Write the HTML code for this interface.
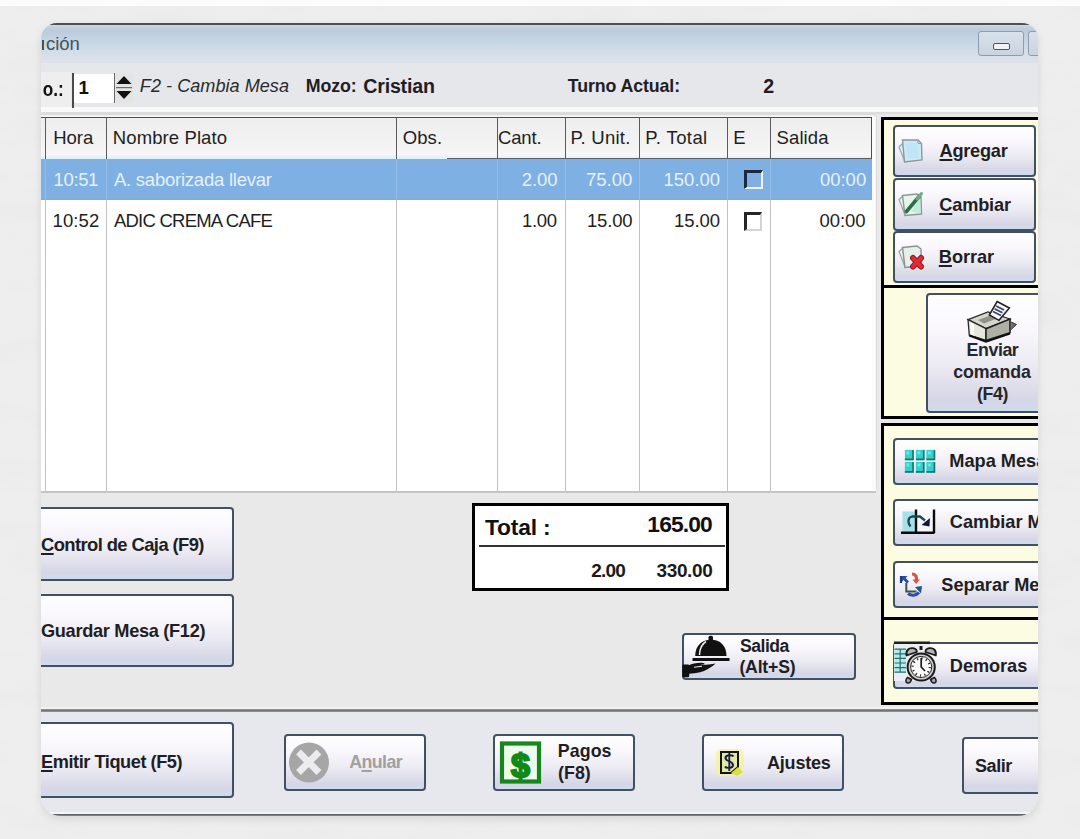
<!DOCTYPE html>
<html><head><meta charset="utf-8">
<style>
*{margin:0;padding:0;box-sizing:border-box}
html,body{width:1080px;height:839px;overflow:hidden}
body{position:relative;background:#ededee;font-family:"Liberation Sans",sans-serif;color:#1a1a1a}
.a{position:absolute}
svg.a{overflow:visible}
#win{position:absolute;left:0;top:0;width:1080px;height:839px;clip-path:inset(23px 42px 23px 41px round 16px 16px 20px 20px);background:#e9e9e9}
.btn{position:absolute;border:2px solid #435062;border-radius:4px;
 background:linear-gradient(#fefeff 0%,#f9f7fc 30%,#ecebf3 60%,#d6d6e6 90%,#cddcee 100%)}
.t{position:absolute;white-space:nowrap;line-height:1}
.col{top:117px;width:1px;height:374px;background:#bdbdbd}
.hcol{top:117px;width:1px;height:42px;background:#5a5a5a}
.panel{background:#fcfce2;border:3px solid #000}
u{text-decoration:underline;text-decoration-thickness:1.5px;text-underline-offset:2px}
</style></head><body>
<svg class="a" style="left:0;top:0" width="1080" height="839"><filter id="tx" x="0" y="0" width="100%" height="100%"><feTurbulence type="fractalNoise" baseFrequency="0.012 0.035" numOctaves="4" seed="7"/><feColorMatrix values="0 0 0 0 0.5  0 0 0 0 0.5  0 0 0 0 0.5  1.1 0 0 0 -0.45"/></filter><rect width="1080" height="839" fill="#eeeeef"/><rect width="1080" height="839" filter="url(#tx)" opacity="0.10"/></svg>
<div class="a" style="left:0px;top:0px;width:1080px;height:6px;background:#fcfcfc"></div>
<div class="a" style="left:41px;top:23px;width:997px;height:793px;border-radius:16px 16px 20px 20px;box-shadow:0 3px 8px rgba(0,0,0,.10)"></div>
<div id="win">
<div class="a" style="left:41px;top:23px;width:998px;height:40px;background:linear-gradient(#e2e4e8 0px,#c2d0de 4px,#bccbdc 8px,#c6d8e4 20px,#d4dee8 30px,#dee1ea 40px)"></div>
<div class="a" style="left:41px;top:23px;width:998px;height:2px;background:#4a5058"></div>
<div class="a" style="left:978px;top:31px;width:46px;height:25px;border:1px solid #8d9cae;border-radius:3px;background:linear-gradient(#d9e2eb,#c9d4e0)"></div>
<div class="a" style="left:993px;top:43px;width:17px;height:7px;border:1px solid #4e565f;border-radius:2px;background:#f2f2f2"></div>
<div class="a" style="left:1028px;top:31px;width:24px;height:25px;border:1px solid #8d9cae;border-radius:3px;background:linear-gradient(#d9e2eb,#c9d4e0)"></div>
<div class="a" style="left:41px;top:63px;width:998px;height:48px;background:#e5e7eb"></div>
<div class="a" style="left:41px;top:72px;width:30px;height:36px;background:#eeeeee"></div>
<div class="a" style="left:41px;top:107px;width:998px;height:5px;background:#f9f9f9"></div>
<div class="a" style="left:41px;top:112px;width:998px;height:2px;background:#dcdcdc"></div>
<div class="a" style="left:72px;top:73px;width:2px;height:35px;background:#4a4a4a"></div>
<div class="a" style="left:74px;top:74px;width:40px;height:29px;background:#fff;border-radius:0 0 3px 3px"></div>
<div class="a" style="left:114px;top:73px;width:1px;height:30px;background:#6a6a6a"></div>
<div class="a" style="left:115px;top:73px;width:18px;height:30px;background:#e4e4e4"></div>
<svg class="a" style="left:115px;top:74px" width="18" height="28" viewBox="0 0 18 28"><path d="M9 2 L16.5 10 L1.5 10Z M1.5 17 L16.5 17 L9 25Z" fill="#111"/><rect x="1" y="13" width="16" height="1.2" fill="#6a6a6a"/></svg>
<div class="a" style="left:41px;top:114px;width:836px;height:379px;background:#f4f4f4;border-radius:0 4px 6px 0;border:1px solid #d8d8d8;border-left:none"></div>
<div class="a" style="left:41px;top:117px;width:831px;height:374px;background:#fff"></div>
<div class="a" style="left:41px;top:117px;width:831px;height:42px;background:linear-gradient(#eeeeee,#f3f3f3 70%,#f8f8f8)"></div>
<div class="a" style="left:41px;top:117px;width:831px;height:1px;background:#505050"></div>
<div class="a" style="left:41px;top:155px;width:831px;height:4px;background:linear-gradient(#f4f6f8,#dcf0fa)"></div>
<div class="a" style="left:447px;top:158px;width:425px;height:1px;background:#606060"></div>
<div class="a" style="left:41px;top:159px;width:831px;height:41px;background:linear-gradient(#8cadcc 0px,#7eb0e3 2px,#7eb0e3 39px,#8ea8c2 41px)"></div>
<div class="a" style="left:871px;top:117px;width:1px;height:42px;background:#505050"></div>
<div class="a" style="left:872px;top:117px;width:4px;height:375px;background:#fafafa"></div>
<div class="a" style="left:41px;top:491px;width:835px;height:2px;background:#c4c4c4"></div>
<div class="a" style="left:45px;top:200px;width:1px;height:291px;background:#c2c2c2"></div>
<div class="a" style="left:45px;top:159px;width:1px;height:41px;background:#94bce6"></div>
<div class="a hcol" style="left:45px"></div>
<div class="a" style="left:106px;top:200px;width:1px;height:291px;background:#c2c2c2"></div>
<div class="a" style="left:106px;top:159px;width:1px;height:41px;background:#94bce6"></div>
<div class="a hcol" style="left:106px"></div>
<div class="a" style="left:396px;top:200px;width:1px;height:291px;background:#c2c2c2"></div>
<div class="a" style="left:396px;top:159px;width:1px;height:41px;background:#94bce6"></div>
<div class="a hcol" style="left:396px"></div>
<div class="a" style="left:497px;top:200px;width:1px;height:291px;background:#c2c2c2"></div>
<div class="a" style="left:497px;top:159px;width:1px;height:41px;background:#94bce6"></div>
<div class="a hcol" style="left:497px"></div>
<div class="a" style="left:565px;top:200px;width:1px;height:291px;background:#c2c2c2"></div>
<div class="a" style="left:565px;top:159px;width:1px;height:41px;background:#94bce6"></div>
<div class="a hcol" style="left:565px"></div>
<div class="a" style="left:639px;top:200px;width:1px;height:291px;background:#c2c2c2"></div>
<div class="a" style="left:639px;top:159px;width:1px;height:41px;background:#94bce6"></div>
<div class="a hcol" style="left:639px"></div>
<div class="a" style="left:727px;top:200px;width:1px;height:291px;background:#c2c2c2"></div>
<div class="a" style="left:727px;top:159px;width:1px;height:41px;background:#94bce6"></div>
<div class="a hcol" style="left:727px"></div>
<div class="a" style="left:770px;top:200px;width:1px;height:291px;background:#c2c2c2"></div>
<div class="a" style="left:770px;top:159px;width:1px;height:41px;background:#94bce6"></div>
<div class="a hcol" style="left:770px"></div>
<div class="a" style="left:744px;top:170px;width:19px;height:19px;border-top:3px solid #1c2a3c;border-left:3px solid #1c2a3c;border-right:2px solid #eef4fc;border-bottom:2px solid #eef4fc;background:#7eb0e3"></div>
<div class="a" style="left:744px;top:212px;width:18px;height:19px;border-top:3px solid #262626;border-left:3px solid #262626;border-right:2px solid #d4d4d4;border-bottom:2px solid #d4d4d4;background:#fff"></div>
<div class="a panel" style="left:881px;top:117px;width:170px;height:302px;"></div>
<div class="a" style="left:881px;top:285px;width:170px;height:3px;background:#000"></div>
<div class="btn" style="left:893px;top:125px;width:143px;height:52px;"></div>
<div class="btn" style="left:893px;top:178px;width:143px;height:53px;"></div>
<div class="btn" style="left:893px;top:231px;width:143px;height:52px;"></div>
<div class="btn" style="left:926px;top:293px;width:130px;height:120px;"></div>
<div class="a panel" style="left:881px;top:423px;width:170px;height:282px;"></div>
<div class="a" style="left:881px;top:617px;width:170px;height:3px;background:#000"></div>
<div class="btn" style="left:893px;top:438px;width:150px;height:47px;"></div>
<div class="btn" style="left:893px;top:499px;width:150px;height:47px;"></div>
<div class="btn" style="left:893px;top:561px;width:150px;height:47px;"></div>
<div class="btn" style="left:893px;top:642px;width:150px;height:47px;"></div>
<div class="btn" style="left:20px;top:507px;width:214px;height:74px;"></div>
<div class="btn" style="left:20px;top:594px;width:214px;height:73px;"></div>
<div class="a" style="left:472px;top:503px;width:257px;height:88px;background:#fff;border:3px solid #000"></div>
<div class="a" style="left:479px;top:545px;width:246px;height:2px;background:#333"></div>
<div class="btn" style="left:682px;top:633px;width:174px;height:47px;"></div>
<div class="a" style="left:41px;top:707px;width:998px;height:2px;background:#f2f2f2"></div>
<div class="a" style="left:41px;top:709px;width:998px;height:3px;background:linear-gradient(#9a9a9a,#747474 50%,#9a9a9a)"></div>
<div class="a" style="left:41px;top:712px;width:998px;height:104px;background:#e6e8ee"></div>
<div class="btn" style="left:20px;top:722px;width:214px;height:76px;"></div>
<div class="btn" style="left:284px;top:734px;width:142px;height:57px;"></div>
<div class="btn" style="left:493px;top:734px;width:142px;height:57px;"></div>
<div class="btn" style="left:702px;top:734px;width:142px;height:57px;"></div>
<div class="btn" style="left:962px;top:737px;width:100px;height:57px;"></div>
<div class="a" style="left:41px;top:812px;width:998px;height:2px;background:#f4f5f8"></div>
<div class="a" style="left:41px;top:814px;width:998px;height:2px;background:linear-gradient(#50565e,#8a8e94)"></div>
<div class="t" style="left:46.06px;top:34.84px;font-size:18.5px;color:#45515d;letter-spacing:-0.10px;">ción</div>
<div class="a" style="left:42px;top:40px;width:1.8px;height:9.5px;background:#45515d"></div>
<div class="t" style="left:42.81px;top:82.44px;font-size:17.2px;font-weight:bold;color:#111;transform:scaleY(1.15);transform-origin:0 84.7%;">o.:</div>
<div class="t" style="left:78.48px;top:79.46px;font-size:18.6px;font-weight:bold;color:#111;">1</div>
<div class="t" style="left:139.86px;top:77.38px;font-size:18.1px;font-style:italic;color:#2a2a2e;letter-spacing:0.02px;">F2 - Cambia Mesa</div>
<div class="t" style="left:305.84px;top:77.53px;font-size:17.8px;font-weight:bold;color:#1e1e24;letter-spacing:-0.13px;">Mozo:</div>
<div class="t" style="left:363.22px;top:77.41px;font-size:19.6px;font-weight:bold;color:#1e1e24;letter-spacing:-0.18px;">Cristian</div>
<div class="t" style="left:567.82px;top:77.53px;font-size:17.8px;font-weight:bold;color:#1e1e24;letter-spacing:-0.11px;">Turno Actual:</div>
<div class="t" style="left:763.31px;top:77.21px;font-size:19.6px;font-weight:bold;color:#1e1e24;">2</div>
<div class="t" style="left:53.22px;top:129.04px;font-size:18.5px;color:#1e1e1e;">Hora</div>
<div class="t" style="left:112.82px;top:129.04px;font-size:18.5px;color:#1e1e1e;letter-spacing:0.10px;">Nombre Plato</div>
<div class="t" style="left:402.77px;top:129.04px;font-size:18.5px;color:#1e1e1e;letter-spacing:0.09px;">Obs.</div>
<div class="t" style="left:497.97px;top:129.04px;font-size:18.5px;color:#1e1e1e;letter-spacing:-0.13px;">Cant.</div>
<div class="t" style="left:570.42px;top:129.04px;font-size:18.5px;color:#1e1e1e;letter-spacing:0.24px;">P. Unit.</div>
<div class="t" style="left:645.32px;top:129.04px;font-size:18.5px;color:#1e1e1e;letter-spacing:0.42px;">P. Total</div>
<div class="t" style="left:733.32px;top:129.04px;font-size:18.5px;color:#1e1e1e;">E</div>
<div class="t" style="left:776.57px;top:129.04px;font-size:18.5px;color:#1e1e1e;letter-spacing:0.10px;">Salida</div>
<div class="t" style="left:53.61px;top:170.54px;font-size:18.5px;color:#e6f1fc;letter-spacing:-0.38px;">10:51</div>
<div class="t" style="left:113.90px;top:170.54px;font-size:18.5px;color:#e6f1fc;letter-spacing:-0.23px;">A. saborizada llevar</div>
<div class="t" style="left:521.67px;top:170.54px;font-size:18.5px;color:#e6f1fc;">2.00</div>
<div class="t" style="left:586.00px;top:170.54px;font-size:18.5px;color:#e6f1fc;">75.00</div>
<div class="t" style="left:663.54px;top:170.54px;font-size:18.5px;color:#e6f1fc;">150.00</div>
<div class="t" style="left:819.90px;top:170.54px;font-size:18.5px;color:#e6f1fc;">00:00</div>
<div class="t" style="left:52.51px;top:212.44px;font-size:18.5px;color:#1e1e1e;letter-spacing:0.12px;">10:52</div>
<div class="t" style="left:113.90px;top:212.44px;font-size:18.5px;color:#1e1e1e;letter-spacing:-0.76px;">ADIC CREMA CAFE</div>
<div class="t" style="left:521.91px;top:212.44px;font-size:18.5px;color:#1e1e1e;letter-spacing:-0.25px;">1.00</div>
<div class="t" style="left:587.01px;top:212.44px;font-size:18.5px;color:#1e1e1e;letter-spacing:-0.18px;">15.00</div>
<div class="t" style="left:673.91px;top:212.44px;font-size:18.5px;color:#1e1e1e;letter-spacing:-0.05px;">15.00</div>
<div class="t" style="left:819.56px;top:212.44px;font-size:18.5px;color:#1e1e1e;letter-spacing:-0.09px;">00:00</div>
<div class="t" style="left:939.54px;top:142.29px;font-size:18.2px;font-weight:bold;color:#1e1e24;letter-spacing:-0.26px;"><u>A</u>gregar</div>
<div class="t" style="left:939.27px;top:195.59px;font-size:18.2px;font-weight:bold;color:#1e1e24;letter-spacing:-0.17px;"><u>C</u>ambiar</div>
<div class="t" style="left:938.82px;top:248.09px;font-size:18.2px;font-weight:bold;color:#1e1e24;letter-spacing:-0.05px;"><u>B</u>orrar</div>
<div class="t" style="left:966.59px;top:342.43px;font-size:17.8px;font-weight:bold;color:#26262c;letter-spacing:-0.43px;">Enviar</div>
<div class="t" style="left:953.14px;top:364.43px;font-size:17.8px;font-weight:bold;color:#26262c;letter-spacing:-0.05px;">comanda</div>
<div class="t" style="left:977.11px;top:386.43px;font-size:17.8px;font-weight:bold;color:#26262c;letter-spacing:-0.43px;">(F4)</div>
<div class="t" style="left:949.32px;top:452.39px;font-size:18.2px;font-weight:bold;color:#1e1e24;">Mapa Mesa</div>
<div class="t" style="left:949.77px;top:513.29px;font-size:18.2px;font-weight:bold;color:#1e1e24;">Cambiar Mesa</div>
<div class="t" style="left:941.35px;top:575.59px;font-size:18.2px;font-weight:bold;color:#1e1e24;">Separar Mesa</div>
<div class="t" style="left:949.82px;top:656.79px;font-size:18.2px;font-weight:bold;color:#1e1e24;letter-spacing:-0.06px;">Demoras</div>
<div class="t" style="left:40.96px;top:535.72px;font-size:18.4px;font-weight:bold;color:#1e1e24;letter-spacing:-0.59px;"><u>C</u>ontrol de Caja (F9)</div>
<div class="t" style="left:40.97px;top:622.29px;font-size:18.2px;font-weight:bold;color:#1e1e24;letter-spacing:-0.31px;">Guardar Mesa (F12)</div>
<div class="t" style="left:485.07px;top:515.50px;font-size:22.8px;font-weight:bold;color:#111;letter-spacing:-0.20px;">Total :</div>
<div class="t" style="left:647.33px;top:512.80px;font-size:22.8px;font-weight:bold;color:#111;letter-spacing:-0.86px;">165.00</div>
<div class="t" style="left:591.14px;top:560.72px;font-size:19px;font-weight:bold;color:#1a1a1a;letter-spacing:-0.74px;">2.00</div>
<div class="t" style="left:656.52px;top:560.72px;font-size:19px;font-weight:bold;color:#1a1a1a;letter-spacing:-0.38px;">330.00</div>
<div class="t" style="left:739.97px;top:637.70px;font-size:17.6px;font-weight:bold;color:#1e1e24;letter-spacing:-0.50px;">Salida</div>
<div class="t" style="left:739.42px;top:658.90px;font-size:17.6px;font-weight:bold;color:#1e1e24;letter-spacing:-0.17px;">(Alt+S)</div>
<div class="t" style="left:41.02px;top:752.99px;font-size:18.2px;font-weight:bold;color:#1e1e24;letter-spacing:-0.45px;"><u>E</u>mitir Tiquet (F5)</div>
<div class="t" style="left:349.25px;top:753.93px;font-size:17.8px;font-weight:bold;color:#a0a0a0;letter-spacing:-0.58px;">A<u>n</u>ular</div>
<div class="t" style="left:557.84px;top:743.23px;font-size:17.8px;font-weight:bold;color:#1e1e24;letter-spacing:0.07px;">Pagos</div>
<div class="t" style="left:558.11px;top:764.93px;font-size:17.8px;font-weight:bold;color:#1e1e24;">(F8)</div>
<div class="t" style="left:767.05px;top:753.76px;font-size:18px;font-weight:bold;color:#1e1e24;letter-spacing:-0.22px;">Ajustes</div>
<div class="t" style="left:975.06px;top:756.76px;font-size:18px;font-weight:bold;color:#1e1e24;letter-spacing:-0.46px;">Salir</div>
<svg class="a" style="left:897px;top:137px" width="28" height="28" viewBox="0 0 28 28">
<path d="M2 10 L6 6 L8 25 Z" fill="#e4f2f6" stroke="#9aa4a8" stroke-width="1.2"/>
<path d="M5.5 3 L21 3 L24.5 6.5 L25 23 L7.5 25 Z" fill="#cdeaf4" stroke="#8c989c" stroke-width="1.4"/>
<path d="M9 6 L20 6 L22 21 L10 22Z" fill="#bfe6f6"/>
<path d="M20.5 3 L21 6.5 L24.5 6.5" stroke="#9aa4a8" stroke-width="1" fill="none"/>
</svg>
<svg class="a" style="left:897px;top:190px" width="30" height="28" viewBox="0 0 30 28">
<path d="M2 9.5 L6 6 L8 25 Z" fill="#eef6f2" stroke="#9aa4a0" stroke-width="1.2"/>
<path d="M5.5 5.5 L20 4 L24 7 L24.5 24 L8 25.5 Z" fill="#e6f4ee" stroke="#8c9894" stroke-width="1.4"/>
<path d="M14 22 L23 8 L23.5 23Z" fill="#bdeed8"/>
<path d="M9.5 21.5 L22.5 6" stroke="#2c7048" stroke-width="3.6" stroke-linecap="round"/>
<path d="M20 9 L24.5 3.5" stroke="#6cae84" stroke-width="3" stroke-linecap="round"/>
</svg>
<svg class="a" style="left:897px;top:242px" width="30" height="28" viewBox="0 0 30 28">
<path d="M2 9.5 L6 6 L8 25 Z" fill="#f0f4f2" stroke="#9aa29f" stroke-width="1.2"/>
<path d="M5.5 5.5 L20 4 L24 7 L24.5 24 L8 25.5 Z" fill="#e8f0ee" stroke="#8a9290" stroke-width="1.4"/>
<path d="M16 16 L24 24.5 M24 16 L16 24.5" stroke="#9a1a22" stroke-width="6" stroke-linecap="round"/>
<path d="M16 16 L24 24.5 M24 16 L16 24.5" stroke="#e22a34" stroke-width="4" stroke-linecap="round"/>
</svg>
<svg class="a" style="left:966px;top:299px" width="54" height="46" viewBox="0 0 54 46">
<path d="M2 20.6 L22 13 L44 20 L20 29.7Z" fill="#d4d6cc" stroke="#2a2a2a" stroke-width="1.3"/>
<path d="M12 21 L30 14.5 L36 17.5 L18 24.5Z" fill="#8e9288"/>
<path d="M31.1 2.5 L43.4 9 L33 21.3 L23.3 16Z" fill="#f6f6fc" stroke="#1e1e1e" stroke-width="1.5"/>
<path d="M30 7 L38 11 M28.5 9.8 L36.5 13.8 M27 12.6 L35 16.6" stroke="#3e4466" stroke-width="1.7"/>
<path d="M2 20.6 L20 29.7 L20 41.4 L3.3 36.2Z" fill="#e6e8e0" stroke="#2a2a2a" stroke-width="1.3"/>
<path d="M4.5 23 L8 25 L8 37 L4.8 35.6Z" fill="#fbfbf8"/>
<path d="M20 29.7 L44 20 L44 33.6 L20 41.4Z" fill="#aeb0a6" stroke="#1e1e1e" stroke-width="1.5"/>
<path d="M44 22.5 L50.5 25.5 L44 31.5Z" fill="#6e706a" stroke="#333" stroke-width="1"/>
<path d="M3.3 36.5 L20 42.5 L44 34.5" stroke="#111" stroke-width="2.2" fill="none"/>
</svg>
<svg class="a" style="left:904px;top:449px" width="33" height="25" viewBox="0 0 33 25"><rect x="0.9" y="0.9" width="8.9" height="10.3" fill="#34d0cc"/><path d="M0.9 10.4 L9.0 10.4 L9.0 0.9" stroke="#1c7470" stroke-width="1.6" fill="none"/><rect x="2.4" y="2.4" width="3" height="3" fill="#6ee6e2"/><rect x="0.9" y="13" width="8.9" height="10.7" fill="#34d0cc"/><path d="M0.9 22.9 L9.0 22.9 L9.0 13" stroke="#1c7470" stroke-width="1.6" fill="none"/><rect x="2.4" y="14.5" width="3" height="3" fill="#6ee6e2"/><rect x="11.9" y="0.9" width="8.6" height="10.3" fill="#34d0cc"/><path d="M11.9 10.4 L19.7 10.4 L19.7 0.9" stroke="#1c7470" stroke-width="1.6" fill="none"/><rect x="13.4" y="2.4" width="3" height="3" fill="#6ee6e2"/><rect x="11.9" y="13" width="8.6" height="10.7" fill="#34d0cc"/><path d="M11.9 22.9 L19.7 22.9 L19.7 13" stroke="#1c7470" stroke-width="1.6" fill="none"/><rect x="13.4" y="14.5" width="3" height="3" fill="#6ee6e2"/><rect x="22.4" y="0.9" width="8.8" height="10.3" fill="#34d0cc"/><path d="M22.4 10.4 L30.4 10.4 L30.4 0.9" stroke="#1c7470" stroke-width="1.6" fill="none"/><rect x="23.9" y="2.4" width="3" height="3" fill="#6ee6e2"/><rect x="22.4" y="13" width="8.8" height="10.7" fill="#34d0cc"/><path d="M22.4 22.9 L30.4 22.9 L30.4 13" stroke="#1c7470" stroke-width="1.6" fill="none"/><rect x="23.9" y="14.5" width="3" height="3" fill="#6ee6e2"/></svg>
<svg class="a" style="left:900px;top:509px" width="37" height="27" viewBox="0 0 37 27">
<rect x="2.5" y="2.5" width="12.5" height="20.5" fill="#a4e2e6"/>
<rect x="17" y="2.5" width="16" height="20.5" fill="#f6f6fa"/>
<path d="M16 0.5 L16 24 M1 23.8 L34.5 23.8 M34 0.5 L34 24" stroke="#0a0a0e" stroke-width="2.4"/>
<path d="M10.5 17.5 C7.5 14 7.5 8.5 12 7.5 L20 7.5 L25 11.5" stroke="#1a4656" stroke-width="2.3" fill="none"/>
<path d="M21.5 16 L30 9 L29.5 17.5Z" fill="#141438"/>
</svg>
<svg class="a" style="left:899px;top:571px" width="25" height="27" viewBox="0 0 25 27">
<path d="M7.3 12 L7.3 20.4 L17.5 20.4" stroke="#3e5648" stroke-width="2" fill="none"/>
<path d="M2 5 L8.5 5 L6.6 7 L10 10.5 L8 12.5 L4.5 9 L2 11.5Z" fill="#2a4c9c"/>
<path d="M2 5 L2 12" stroke="#1e3a80" stroke-width="2.2"/>
<path d="M13 1.5 C17 1.5 19.5 4.5 19 8.5 L21 8.5 L17 13 L13.5 8.5 L16 8.5 C16 6 15 4.5 13 4.5Z" fill="#d4583c"/>
<path d="M9 22.5 C12 25 17 25 20 21.5" stroke="#2c4ea8" stroke-width="3" fill="none"/>
<path d="M16 16 L23 15 L22 22.5Z" fill="#22548c"/>
</svg>
<svg class="a" style="left:893px;top:641px" width="46" height="46" viewBox="0 0 46 46">
<rect x="1" y="1" width="36" height="39" fill="#ececf2"/>
<path d="M1 1.8 L37 1.8" stroke="#1e1e1e" stroke-width="2.6"/>
<rect x="1.5" y="8" width="11.5" height="23.5" fill="#b2ecec"/>
<path d="M1.5 8.2 L13 8.2 M1.5 12.8 L13 12.8 M1.5 17.4 L13 17.4 M1.5 22 L13 22 M1.5 26.6 L13 26.6 M1.5 31.2 L13 31.2 M7.2 8 L7.2 31.5" stroke="#2a6e6e" stroke-width="1.2"/>
<path d="M13.5 14.5 C12.5 9 16.5 6.5 20 7.2 C22.5 7.8 24 9.5 23.8 11Z" fill="#b4b4b4" stroke="#1a1a1a" stroke-width="1.8" stroke-linejoin="round"/>
<path d="M42.8 14.5 C43.8 9 39.8 6.5 36.3 7.2 C33.8 7.8 32.3 9.5 32.5 11Z" fill="#b4b4b4" stroke="#1a1a1a" stroke-width="1.8" stroke-linejoin="round"/>
<rect x="26.5" y="5" width="3" height="4" fill="#1a1a1a"/>
<path d="M14.5 36.5 C12.5 38.5 12.2 41.5 14.5 42 C16.5 42.3 18 40 18.5 38.5Z" fill="#a8a8a8" stroke="#1a1a1a" stroke-width="1.5"/>
<path d="M41.5 36.5 C43.5 38.5 43.8 41.5 41.5 42 C39.5 42.3 38 40 37.5 38.5Z" fill="#a8a8a8" stroke="#1a1a1a" stroke-width="1.5"/>
<circle cx="28.2" cy="26" r="13.6" fill="#cfcfcf" stroke="#1a1a1a" stroke-width="2"/>
<circle cx="28.2" cy="26" r="10.6" fill="#fbfbfb" stroke="#2a2a2a" stroke-width="1"/>
<circle cx="28.2" cy="26" r="8.6" fill="none" stroke="#222" stroke-width="2.2" stroke-dasharray="1.2 3.3"/>
<path d="M28.2 17 L28.2 26 L32 30" stroke="#1a1a1a" stroke-width="1.7" fill="none"/>
</svg>
<svg class="a" style="left:681px;top:634px" width="50" height="45" viewBox="0 0 50 45">
<rect x="27.5" y="1.8" width="4.5" height="5" rx="1.5" fill="#111"/>
<path d="M14.2 22 C14.2 11.5 21 5.8 30 5.8 C39 5.8 45.5 11.5 45.5 22Z" fill="#111"/>
<path d="M18.5 21 C18.5 14 21 10 25 7.5" stroke="#eeeef2" stroke-width="1.5" fill="none"/>
<rect x="11.5" y="24" width="37" height="3" fill="#111"/>
<rect x="1.2" y="30.5" width="7" height="12.8" rx="1.2" fill="#111"/>
<path d="M7.5 31.5 C11 29.5 16 28.6 21 28.8 C23 28.9 24 29.5 23.5 30.2 L18 31.2 L25 30.8 C28.5 30.5 31.5 30 34.5 29.6 C32 32 28 35 23 37 C18 38.8 12 39.5 7.5 39.8 Z" fill="#111"/>
<path d="M13 33.2 L21 32.2" stroke="#eeeef2" stroke-width="1.1"/>
</svg>
<svg class="a" style="left:287px;top:741px" width="44" height="44" viewBox="0 0 44 44">
<circle cx="22" cy="21.5" r="20" fill="#a6a6a6"/>
<path d="M11.5 11 L32 31.5 M32 11 L11.5 31.5" stroke="#ececee" stroke-width="6.8"/>
</svg>
<svg class="a" style="left:499px;top:741px" width="43" height="43" viewBox="0 0 43 43">
<rect x="3" y="2.5" width="37" height="38" fill="#eefcee" stroke="#17861c" stroke-width="4.2"/>
<text x="21.5" y="35.5" text-anchor="middle" font-family="Liberation Sans" font-weight="bold" font-size="34" fill="#0f8a16" stroke="#0f8a16" stroke-width="2.2">$</text>
</svg>
<svg class="a" style="left:715px;top:748px" width="30" height="29" viewBox="0 0 30 29">
<rect x="1" y="1" width="28" height="27" rx="5" fill="#f2f49a" opacity=".75"/>
<path d="M6 4 L23 4 L23 19 L16 25 L6 25Z" fill="#e2e8a8" stroke="#141414" stroke-width="2"/>
<path d="M16 25 L23 19 L28 24 L22 28Z" fill="#d8e040"/>
<path d="M18.5 8.5 C17.5 6.5 10 6.5 10.5 10.5 C11 13.5 18 13 18 17 C18 20.5 11 20.5 10 18.5" stroke="#1c1c48" stroke-width="2" fill="none"/><path d="M14.3 5 L14.3 23" stroke="#1c1c48" stroke-width="1.8"/>
</svg>
</div>
</body></html>
